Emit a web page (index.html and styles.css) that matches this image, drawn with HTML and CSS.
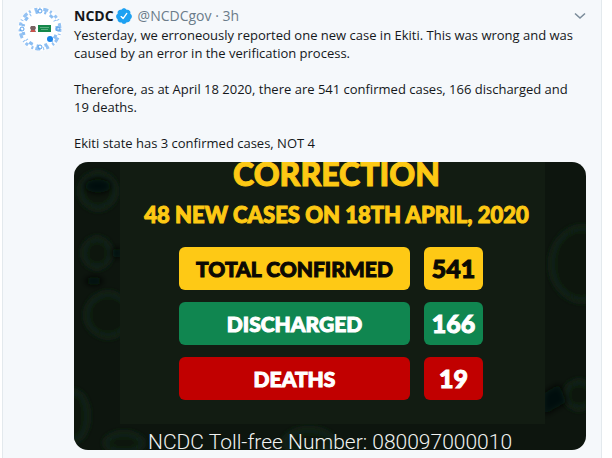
FILE: index.html
```
<!DOCTYPE html>
<html lang="en">

<head>
    <meta charset="utf-8">
    <title>NCDC</title>
    <link rel="stylesheet" href="styles.css">
</head>

<body>
    <article class="tweet">
        <svg class="avatar" viewBox="0 0 44 44" aria-hidden="true">
            <circle cx="22" cy="22" r="22" fill="#fff"/>
            <g fill="none" stroke="#5ba2ec">
                <circle cx="22" cy="22" r="20" stroke-width="3" stroke-dasharray="3 2 1 3 5 2 2 4" opacity=".65"/>
                <circle cx="22" cy="22" r="17" stroke-width="3" stroke-dasharray="2 4 4 3 1 5 3 6" opacity=".7"/>
                <circle cx="22" cy="4" r="2"/>
                <circle cx="4" cy="22" r="2"/>
                <circle cx="40" cy="22" r="2"/>
                <circle cx="22" cy="40" r="2"/>
            </g>
            <path d="M13 19h4l1 2-1 2 1 2h-6l1-2-1-2z" fill="#7a6262"/>
            <path d="M13 23h4v2h-4z" fill="#c9534c"/>
            <rect x="20" y="18" width="13" height="7" fill="#16884b"/>
            <path d="M22 20.500h9M23 22.500h7" stroke="#6db98f" stroke-width=".8"/>
            <circle cx="32" cy="32" r="3" fill="#1b83e8"/>
        </svg>

        <div class="content">
            <header class="head">
                <b class="name">NCDC</b>
                <svg class="verified" viewBox="0 0 24 24" aria-label="Verified account">
                    <path fill="#1da1f2" d="M22.5 12.5c0-1.58-.875-2.95-2.148-3.6.154-.435.238-.905.238-1.4 0-2.21-1.71-3.998-3.818-3.998-.47 0-.92.084-1.336.25C14.818 2.415 13.51 1.5 12 1.5s-2.816.917-3.437 2.25c-.415-.165-.866-.25-1.336-.25-2.11 0-3.818 1.79-3.818 4 0 .494.083.964.237 1.4-1.272.65-2.147 2.018-2.147 3.6 0 1.495.782 2.798 1.942 3.486-.02.17-.032.34-.032.514 0 2.21 1.708 4 3.818 4 .47 0 .92-.086 1.335-.25.62 1.334 1.926 2.25 3.437 2.25s2.818-.916 3.437-2.25c.415.163.865.248 1.336.248 2.11 0 3.818-1.79 3.818-4 0-.174-.012-.344-.033-.513 1.158-.687 1.943-1.99 1.943-3.484z"/>
                    <path fill="none" stroke="#fff" stroke-width="1.8" stroke-linecap="round" stroke-linejoin="round" d="M8.2 12.8l2.6 2.6 4.9-6.8"/>
                </svg>
                <span class="meta">@NCDCgov · 3h</span>
                <button class="more" type="button" aria-label="More">
                    <svg viewBox="0 0 12 8"><path d="M1 1.500l5 4.500 5-4.500" fill="none" stroke="#7b8c9a" stroke-width="1.600"/></svg>
                </button>
            </header>

            <div class="text">
                <p>Yesterday, we erroneously reported one new case in Ekiti. This was wrong and was caused by an error in the verification process.</p>
                <p>Therefore, as at April 18 2020, there are 541 confirmed cases, 166 discharged and 19 deaths.</p>
                <p>Ekiti state has 3 confirmed cases, NOT 4</p>
            </div>

            <section class="poster">
                <!-- dark cells behind the panel -->
                <svg class="cells" viewBox="0 0 512 288" preserveAspectRatio="none" aria-hidden="true">
                    <defs>
                        <filter id="soft"><feGaussianBlur stdDeviation="3"/></filter>
                    </defs>
                    <g filter="url(#soft)" fill="#0c120c" stroke="#15291a" stroke-width="4">
                        <ellipse cx="24" cy="29" rx="17" ry="17"/>
                        <ellipse cx="23" cy="91" rx="13" ry="14"/>
                        <circle cx="34" cy="153" r="21"/>
                        <ellipse cx="0" cy="254" rx="13" ry="24"/>
                        <ellipse cx="508" cy="102" rx="30" ry="36"/>
                        <circle cx="505" cy="233" r="13"/>
                        <ellipse cx="50" cy="281" rx="18" ry="9"/>
                        <ellipse cx="235" cy="280" rx="24" ry="12"/>
                    </g>
                    <g filter="url(#soft)" fill="#060a07">
                        <ellipse cx="24" cy="24" rx="13" ry="7"/>
                        <circle cx="43" cy="91" r="5"/>
                        <ellipse cx="20" cy="119" rx="9" ry="4"/>
                        <path d="M470 231l15-9 8 18-23 13z"/>
                    </g>
                </svg>
                <div class="panel">
                    <h1 class="title">CORRECTION</h1>
                    <h2 class="subtitle">48 NEW CASES ON 18TH APRIL, 2020</h2>
                    <dl class="stats">
                        <dt class="confirmed">TOTAL CONFIRMED</dt>
                        <dd class="confirmed">541</dd>
                        <dt class="discharged">DISCHARGED</dt>
                        <dd class="discharged">166</dd>
                        <dt class="deaths">DEATHS</dt>
                        <dd class="deaths">19</dd>
                    </dl>
                </div>
                <p class="hotline">NCDC Toll-free Number: 080097000010</p>
            </section>
        </div>
    </article>
</body>

</html>
```
FILE: styles.css
```
* {
    box-sizing: border-box;
}

body {
    margin: 0;
    padding: 0 10px 0 2px;
    background: #fff;
    font-family: "Open Sans", "Noto Sans", sans-serif;
    font-size: 14px;
    line-height: 18px;
    color: #14171a;
}

h1, h2, p, dl, dd {
    margin: 0;
}

.tweet {
    display: flex;
    gap: 12px;
    min-height: 100vh;
    padding: 7px 15px 8px 15px;
    background: #f5f8fb;
    border: solid #e3e9ed;
    border-width: 0 1px;
}

.avatar {
    flex: none;
    width: 44px;
    height: 44px;
}

.content {
    flex: 1;
    min-width: 0;
}

.head {
    display: flex;
    align-items: center;
    height: 18px;
    margin-bottom: 1px;
}

.name {
    font-weight: 700;
}

.verified {
    width: 18px;
    height: 18px;
    margin: 0 5px 0 1px;
}

.meta {
    color: #6b7c8a;
}

.more {
    width: 12px;
    height: 12px;
    margin-left: auto;
    padding: 0;
    border: 0;
    background: none;
    line-height: 0;
    cursor: pointer;
}

.text {
    padding-right: 8px;
    font-size: 13px;
}

.text p {
    margin-bottom: 18px;
}

.text p:last-child {
    margin-bottom: 10px;
}

.poster {
    position: relative;
    aspect-ratio: 16 / 9;
    overflow: hidden;
    border-radius: 14px;
    background: #0d150e;
    text-align: center;
}

.cells {
    position: absolute;
    inset: 0;
    width: 100%;
    height: 100%;
}

.panel {
    position: relative;
    margin: 0 41px 0 46px;
    padding-bottom: 24px;
    background: #121c12;
    font-family: Lato, sans-serif;
    font-weight: 900;
    -webkit-text-stroke: 1px currentColor;
}

.title {
    padding-left: 8px;
    font-size: 32px;
    font-weight: 900;
    line-height: 24px;
    color: #fdc914;
}

.subtitle {
    padding: 17px 0 19px 8px;
    font-size: 22px;
    font-weight: 900;
    line-height: 24px;
    white-space: nowrap;
    color: #fdc914;
}

.stats {
    display: grid;
    grid-template-columns: 231fr 59fr;
    gap: 12px 14px;
    padding: 1px 62px 0 59px;
    line-height: 43px;
}

.stats dt,
.stats dd {
    border-radius: 6px;
    color: #fff;
}

.stats dt {
    font-size: 21px;
}

.stats dd {
    font-size: 25px;
}

.stats .confirmed {
    background: #fec915;
    color: #0c0903;
}

.stats .discharged {
    background: #108650;
}

.stats .deaths {
    background: #c10000;
}

.hotline {
    position: relative;
    font-family: Roboto, sans-serif;
    font-size: 21px;
    line-height: 36px;
    font-weight: 300;
    white-space: nowrap;
    color: #f1f3f1;
}
```
